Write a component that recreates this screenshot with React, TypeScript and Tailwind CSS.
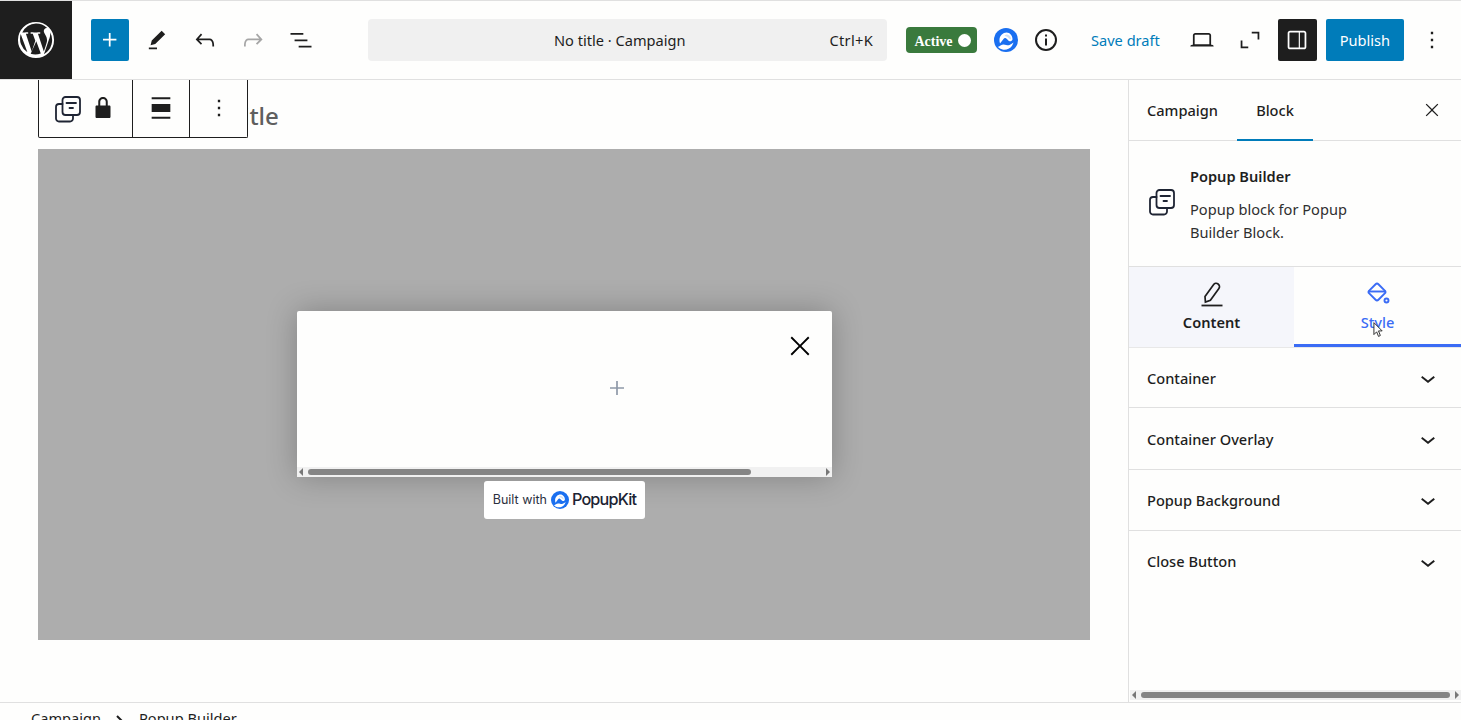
import React from "react";

const Icon = ({ d, className = "w-7 h-7", fill = "currentColor" }: { d: string; className?: string; fill?: string }) => (
  <svg viewBox="0 0 24 24" className={className} fill={fill}>
    <path d={d} />
  </svg>
);

const icons = {
  plus: "M11 12.5V17.5H12.5V12.5H17.5V11H12.5V6H11V11H6V12.5H11Z",
  tool: "m19 7-3-3-8.5 8.5-1 4 4-1L19 7Zm-7 11.5H5V20h7v-1.5Z",
  undo: "M18.3 11.7c-.6-.6-1.4-.9-2.3-.9H6.7l2.9-3.3-1.1-1-4.5 5L8.5 16l1-1-2.7-2.7H16c.5 0 .9.2 1.3.5 1 1 1 3.4 1 4.5v.3h1.5v-.2c0-1.5 0-4.3-1.5-5.7z",
  redo: "M15.6 6.5l-1.1 1 2.9 3.3H8c-.9 0-1.7.3-2.3.9-1.4 1.5-1.4 4.2-1.4 5.6v.2h1.5v-.3c0-1.1 0-3.5 1-4.5.3-.3.7-.5 1.3-.5h9.2L14.5 15l1.1 1.1 4.6-4.6-4.6-5z",
  list: "M3 6h11v1.5H3V6Zm3.5 5.5h11V13h-11v-1.5ZM21 17H10v1.5h11V17Z",
  laptop: "M20.5 16h-.7V8c0-1.1-.9-2-2-2H6.2c-1.1 0-2 .9-2 2v8h-.7c-.8 0-1.5.7-1.5 1.5h20c0-.8-.7-1.5-1.5-1.5zM5.7 8c0-.3.2-.5.5-.5h11.6c.3 0 .5.2.5.5v7.6H5.7V8z",
  expand: "M13.5 5H20v6.5h-1.5V6.5h-5V5ZM4 12.5h1.5v5h5V19H4v-6.5Z",
  panel: "M18 4H6c-1.1 0-2 .9-2 2v12c0 1.1.9 2 2 2h12c1.1 0 2-.9 2-2V6c0-1.1-.9-2-2-2zM6 18.5c-.3 0-.5-.2-.5-.5V6c0-.3.2-.5.5-.5h7.5v13H6zm12.5-.5c0 .3-.2.5-.5.5h-3.5v-13H18c.3 0 .5.2.5.5v12z",
  more: "M13 19h-2v-2h2v2zm0-6h-2v-2h2v2zm0-6h-2V5h2v2z",
  close: "m13.06 12 6.47-6.47-1.06-1.06L12 10.94 5.53 4.47 4.47 5.53 10.94 12l-6.47 6.47 1.06 1.06L12 13.06l6.47 6.47 1.06-1.06L13.06 12Z",
  lock: "M17 10h-1.2V7c0-2.1-1.7-3.8-3.8-3.8-2.1 0-3.8 1.7-3.8 3.8v3H7c-.6 0-1 .4-1 1v8c0 .6.4 1 1 1h10c.6 0 1-.4 1-1v-8c0-.6-.4-1-1-1zm-2.8 0H9.8V7c0-1.2 1-2.2 2.2-2.2s2.2 1 2.2 2.2v3z",
  align: "M5 5.5h14V4H5v1.5ZM5 20h14v-1.5H5V20ZM5 9h14v6H5z",
  chevron: "M17.5 11.6L12 16l-5.5-4.4.9-1.2L12 14l4.5-3.6 1 1.2z",
};

function WpLogo() {
  return (
    <svg viewBox="0 0 80 80" className="w-[38px] h-[38px]" fill="#fff">
      <path d="M40 2a38 38 0 1 0 0 76 38 38 0 0 0 0-76Zm0 3.4a34.6 34.6 0 0 1 23.5 9.2c-.3 0-.6-.1-.9-.1-3.6 0-6.2 3.200-6.200 6.600 0 3.100 1.800 5.700 3.700 8.800 1.400 2.500 3.100 5.700 3.100 10.400 0 3.200-1.200 6.900-2.900 12.100L56.500 64 44.100 27c2.100-.1 3.900-.3 3.900-.3 1.800-.2 1.600-2.900-.2-2.800 0 0-5.500.4-9.100.4-3.300 0-8.900-.4-8.900-.4-1.800-.1-2.100 2.700-.2 2.800 0 0 1.700.2 3.600.3l5.300 14.600-7.500 22.400L18.700 27c2.100-.1 3.900-.3 3.900-.3 1.800-.2 1.600-2.900-.2-2.800 0 0-5.500.4-9.100.4h-2.200A34.500 34.500 0 0 1 40 5.400ZM7.800 27.400 21.900 66A34.600 34.600 0 0 1 7.800 27.400Zm32.800 15.200 9.300 25.400.2.400a34.700 34.700 0 0 1-21.200.6l11.700-26.400Zm29.100-19.100a34.500 34.500 0 0 1-13 46.400l10.600-30.700c2-4.900 2.600-8.900 2.600-12.400 0-1.200-.1-2.300-.2-3.300Z" />
    </svg>
  );
}

function PopupIcon({ className }: { className: string }) {
  return (
    <svg viewBox="0 0 26 28" className={className} fill="none" stroke="#1e2433" strokeWidth="1.800" strokeLinecap="round">
      <path d="M7.500 9H4a3 3 0 0 0-3 3v11.500a3 3 0 0 0 3 3h11a3 3 0 0 0 3-3V20" />
      <rect x="7.500" y="2" width="17.500" height="18" rx="3" />
      <path d="M11.500 8h9.500M14.500 13h3.500" />
    </svg>
  );
}

function KitLogo({ className }: { className: string }) {
  return (
    <svg viewBox="0 0 24 24" className={className}>
      <circle cx="12" cy="12" r="12" fill="#1a6ff0" />
      <path d="M12.500 4.500C9 4.500 6 7.500 5.500 11c-.2 1.500 0 3 .5 4.500L9.500 11c.5-.7 1-1.200 2-1 .8.2 3 3 4 3.200 1.500.3 2.500-.5 3-1.700.3-3.500-2.500-7-6-7Z" fill="#fff" />
      <path d="M12.500 6.500c-.8 0-1.500.8-2 1.500.8-.3 1.500 0 2.500.7 1.500 1 2.500 2.500 4 2.500.2-2.500-2-4.700-4.500-4.700Z" fill="#cfe0f8" />
      <path d="M3.500 19c2-.5 4-2.500 6-2.500 2.800 0 4 1.500 6 .5 1.500-.7 3-1.500 4-2.500-.5 1.500-1.500 4.500-4.500 6-2.500 1.200-4.500 1.500-6.500 1-2-.4-3.500-1.300-4.500-2.500Z" fill="#fff" />
    </svg>
  );
}

function Scrollbar({ thumb }: { thumb: string }) {
  return (
    <div className="h-[10px] bg-[#f1f1f1] flex items-center">
      <span className="ml-[2px] w-0 h-0 border-y-[4px] border-y-transparent border-r-[4px] border-r-[#777]" />
      <span className={`ml-[5px] h-[6px] rounded-full bg-[#858585] ${thumb}`} />
      <span className="mr-[2px] ml-auto w-0 h-0 border-y-[4px] border-y-transparent border-l-[4px] border-l-[#777]" />
    </div>
  );
}

const panels = [
  { label: "Container", height: "h-[60px]", text: "pt-[2px]" },
  { label: "Container Overlay", height: "h-[62px]", text: "pt-[2px]" },
  { label: "Popup Background", height: "h-[61px]", text: "pt-[2px]" },
  { label: "Close Button", height: "h-[62px]", text: "" },
];

function TopBar() {
  return (
    <header className="h-[80px] shrink-0 flex items-center border-y border-[#e0e0e0] bg-[#fefefd] text-[#1e1e1e] text-[14.6px]">
      <div className="w-[72px] h-full bg-[#1e1e1e] flex items-center justify-center">
        <WpLogo />
      </div>
      <button className="ml-[19px] w-[38px] h-[42px] bg-[#007cba] rounded-[2px] flex items-center justify-center text-white">
        <Icon d={icons.plus} />
      </button>
      <div className="ml-[4px] flex">
        <span className="w-12 flex justify-center"><Icon d={icons.tool} /></span>
        <span className="w-12 flex justify-center"><Icon d={icons.undo} /></span>
        <span className="w-12 flex justify-center text-[#a6a6a6]"><Icon d={icons.redo} /></span>
        <span className="w-12 flex justify-center"><Icon d={icons.list} /></span>
      </div>
      <div className="ml-[43px] w-[519px] h-[42px] bg-[#f0f0f0] rounded-[4px] flex items-center justify-between pl-[186px] pr-[14px] pt-[2px]">
        <span>No title · Campaign</span>
        <span className="tracking-[0.3px]">Ctrl+K</span>
      </div>
      <div className="ml-[19px] w-[71px] h-[26px] pl-[2px] rounded-[4px] bg-[#3a7a3d] flex items-center justify-center gap-[5px] text-white font-bold text-[14px] [font-family:'Liberation_Serif',serif]">
        <span className="pt-[2px]">Active</span>
        <span className="w-[13px] h-[13px] rounded-full bg-white" />
      </div>
      <KitLogo className="ml-[17px] w-6 h-6" />
      <svg viewBox="0 0 24 24" className="ml-[16px] w-6 h-6" fill="none" stroke="#1e1e1e" strokeWidth="2">
        <circle cx="12" cy="12" r="10" />
        <path d="M12 10.500V17.500M12 6.500v2" />
      </svg>
      <span className="ml-[33px] pt-[2px] text-[#007cba]">Save draft</span>
      <Icon d={icons.laptop} className="ml-[28px] w-7 h-7" />
      <Icon d={icons.expand} className="ml-[20px] w-7 h-7" />
      <span className="ml-[14px] w-[39px] h-[42px] bg-[#1e1e1e] rounded-[2px] flex items-center justify-center text-white">
        <Icon d={icons.panel} />
      </span>
      <button className="ml-[9px] w-[78px] h-[42px] pt-[1px] bg-[#007cba] rounded-[2px] text-white">Publish</button>
      <Icon d={icons.more} className="ml-[14px] w-7 h-7" />
    </header>
  );
}

function BlockToolbar() {
  return (
    <div className="absolute left-[38px] top-0 w-[210px] h-[58px] flex bg-[#fefefd] border-x border-b border-[#1e1e1e] rounded-b-[2px] text-[#1e1e1e]">
      <div className="w-[94px] flex items-center pl-[16px] gap-[7px] border-r border-[#1e1e1e]">
        <PopupIcon className="w-[26px] h-[28px]" />
        <Icon d={icons.lock} className="w-[30px] h-[30px] mb-[1px]" />
      </div>
      <div className="w-[57px] flex items-center justify-center border-r border-[#1e1e1e]">
        <Icon d={icons.align} className="w-[32px] h-[32px] mb-[2px]" />
      </div>
      <div className="flex-1 flex items-center justify-center">
        <Icon d={icons.more} className="w-7 h-7 mb-[2px]" />
      </div>
    </div>
  );
}

function Canvas() {
  return (
    <main className="relative w-[1128px] bg-[#fefefd] pl-[38px] pr-[38px]">
      <div className="h-[69px] flex items-center pl-[144px] pt-[2px] text-[24px] font-medium text-[#5f5f5f]">Add title</div>
      <div className="w-[1052px] h-[491px] bg-[#adadad] flex flex-col items-center justify-center pt-[40px]">
        <div className="w-[535px] h-[166px] bg-[#fefefd] rounded-[2px] flex flex-col shadow-[0_0_30px_rgba(0,0,0,0.25)]">
          <div className="relative flex-1 flex items-center justify-center">
            <Icon d={icons.close} className="absolute right-[17px] top-[20px] w-[30px] h-[30px] text-black" />
            <svg viewBox="0 0 16 16" className="ml-[106px] mt-[-2px] w-4 h-4" stroke="#8f99a8" strokeWidth="1.700">
              <path d="M8 1v14M1 8h14" />
            </svg>
          </div>
          <Scrollbar thumb="w-[443px]" />
        </div>
        <div className="mt-[4px] w-[161px] h-[38px] bg-white rounded-[3px] flex items-center justify-center gap-[3px] pl-[1px] [font-family:Inter,sans-serif]">
          <span className="text-[12.500px] pt-[2px] text-[#2b3040] mr-[1px]">Built with</span>
          <KitLogo className="w-[18px] h-[18px]" />
          <span className="text-[16.200px] font-medium tracking-[-0.8px] text-[#1c2333]">PopupKit</span>
        </div>
      </div>
      <BlockToolbar />
    </main>
  );
}

function Sidebar() {
  return (
    <aside className="flex-1 flex flex-col bg-[#fefefd] border-l border-[#e0e0e0] text-[#1e1e1e] text-[14.6px]">
      <div className="h-[61px] shrink-0 flex items-stretch border-b border-[#e0e0e0] relative font-medium">
        <span className="w-[108px] pl-[18px] pt-[2px] flex items-center">Campaign</span>
        <span className="w-[76px] pt-[2px] flex items-center justify-center border-b-2 border-[#007cba] -mb-px">Block</span>
        <Icon d={icons.close} className="ml-auto mr-[19px] self-center w-5 h-5" />
      </div>
      <div className="h-[126px] shrink-0 flex border-b border-[#e0e0e0] pl-[20px] pt-[25px]">
        <PopupIcon className="mt-[22px] w-[26px] h-[28px]" />
        <div className="ml-[15px] w-[190px]">
          <div className="font-semibold leading-5">Popup Builder</div>
          <p className="mt-[12px] leading-[23px] text-[#2f2f2f]">Popup block for Popup Builder Block.</p>
        </div>
      </div>
      <div className="h-[81px] shrink-0 flex border-b border-[#e8e8e8]">
        <div className="w-[165px] bg-[#f5f6fb] flex flex-col items-center pt-[14px] font-semibold">
          <svg viewBox="0 0 24 26" className="w-[24px] h-[26px]" fill="none" stroke="#1e1e1e" strokeWidth="1.700">
            <path d="M5 15.500 13.500 3.800a3.300 3.300 0 0 1 5.400 3.800l-8.500 11.700-5 1.700-.4-5.500Z" />
            <path d="M1.500 24.500h21" strokeWidth="1.800" />
          </svg>
          <span className="mt-[5px]">Content</span>
        </div>
        <div className="flex-1 flex flex-col items-center pt-[14px] font-medium text-[#3b6cf5] border-b-[3px] border-[#3b6cf5]">
          <svg viewBox="0 0 24 26" className="w-[24px] h-[26px]" fill="none" stroke="#3b6cf5" strokeWidth="1.900">
            <rect x="4.500" y="4.500" width="13" height="13" rx="2" transform="rotate(45 11 11)" />
            <path d="M2 10.500h18" />
            <circle cx="20.500" cy="19.500" r="2" />
          </svg>
          <span className="mt-[5px]">Style</span>
        </div>
      </div>
      {panels.map((panel, i) => (
        <div
          key={panel.label}
          className={`${panel.height} shrink-0 flex items-center justify-between pl-[18px] pr-[18px] font-medium ${i < panels.length - 1 ? "border-b border-[#e0e0e0]" : ""}`}
        >
          <span className={panel.text}>{panel.label}</span>
          <Icon d={icons.chevron} className="w-[30px] h-[30px]" />
        </div>
      ))}
      <div className="mt-auto mb-[2px] pl-[1px]">
        <Scrollbar thumb="w-[309px]" />
      </div>
    </aside>
  );
}

export default function App() {
  return (
    <div className="relative w-[1461px] h-[720px] overflow-hidden flex flex-col bg-[#fefefd] [font-family:'Noto_Sans',sans-serif]">
      <TopBar />
      <div className="h-[622px] shrink-0 flex">
        <Canvas />
        <Sidebar />
      </div>
      <footer className="flex-1 flex items-start border-t border-[#e0e0e0] pl-[31px] pt-[5px] text-[14.6px] text-[#1e1e1e]">
        <span>Campaign</span>
        <svg viewBox="0 0 8 10" className="ml-[14px] mt-[7px] w-2 h-[10px]" fill="none" stroke="#1e1e1e" strokeWidth="2">
          <path d="m2 1 4 4-4 4" />
        </svg>
        <span className="ml-[16px]">Popup Builder</span>
      </footer>
      <svg viewBox="0 0 12 18" className="absolute left-[1373px] top-[321px] w-[11px] h-[18px]" fill="#fff" stroke="#222" strokeWidth="1">
        <path d="M1 1v13l3-3 2 5 2-1-2-5h4Z" />
      </svg>
    </div>
  );
}
